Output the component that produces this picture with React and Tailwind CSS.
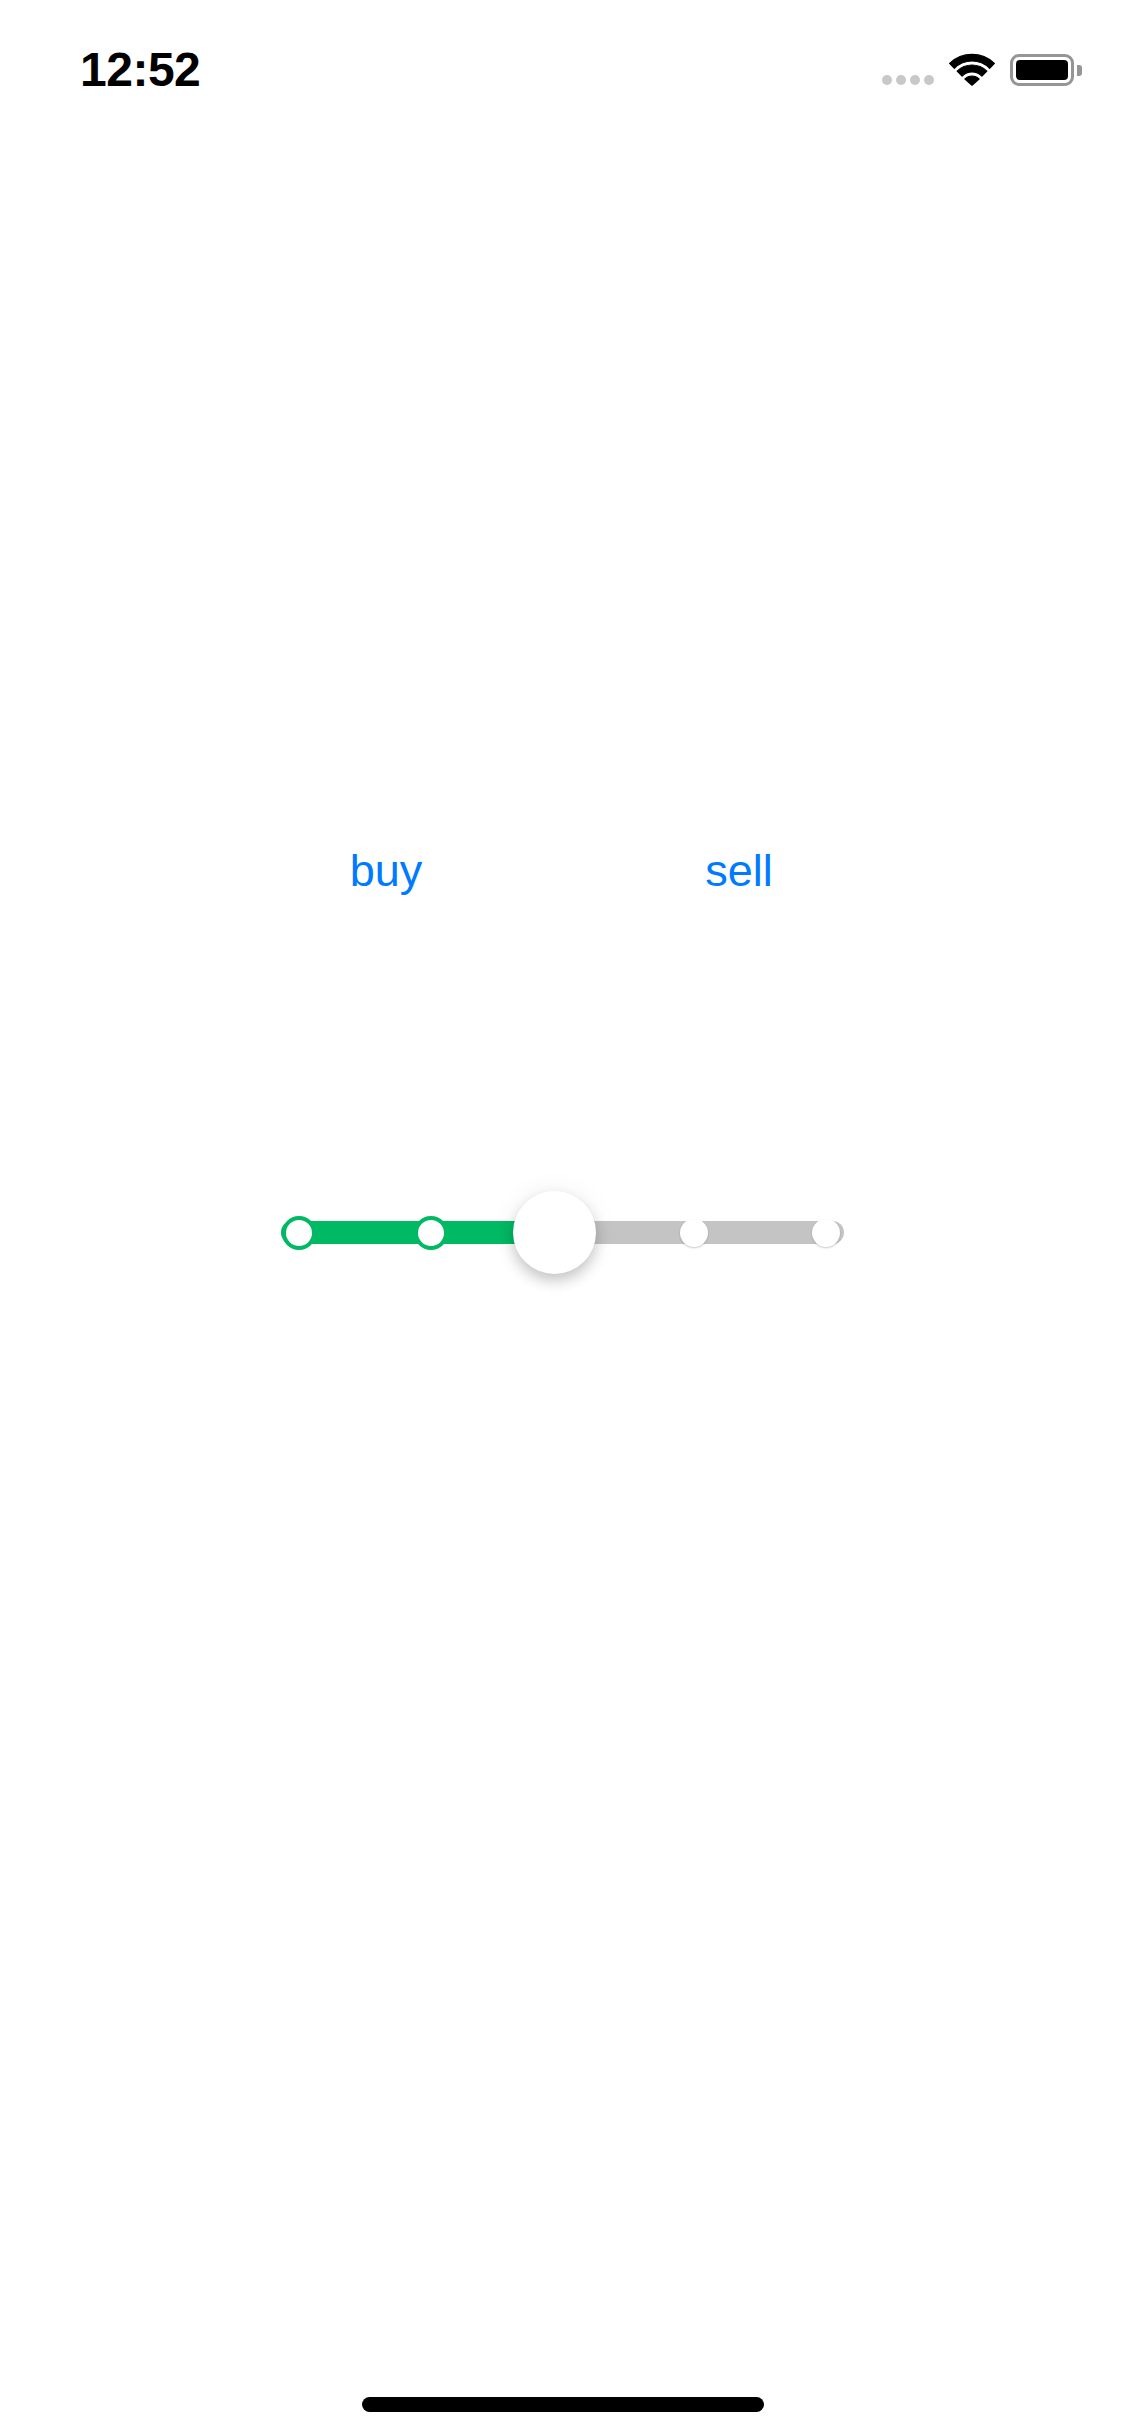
import React from 'react';

const font = { fontFamily: '"Liberation Sans", Arial, sans-serif' };

function Wifi() {
  return (
    <svg width="46" height="33" viewBox="0 0 46 33" className="block">
      <g fill="#000" stroke="#000" strokeWidth="1.2" strokeLinejoin="round">
        <path d="M0.6 10.4 A32.5 32.5 0 0 1 45.4 10.4 L40.68 15.32 A25 25 0 0 0 5.32 15.32 Z" />
        <path d="M8.15 18.15 A21 21 0 0 1 37.85 18.15 L32.9 23.1 A14 14 0 0 0 13.1 23.1 Z" />
        <path d="M23 32.2 L15.93 25.93 A10 10 0 0 1 30.07 25.93 Z" />
      </g>
    </svg>
  );
}

function Battery() {
  return (
    <div className="flex items-center">
      <div className="w-[64px] h-[32px] rounded-[9px] border-[3px] border-[#959595] p-[3px]">
        <div className="w-full h-full rounded-[4px] bg-black" />
      </div>
      <div className="w-[5px] h-[11px] ml-[3px] rounded-r-[3px] bg-[#959595]" />
    </div>
  );
}

function StatusBar() {
  return (
    <div className="h-[132px] flex justify-between items-start pl-[80px] pr-[43px] pt-[46px]">
      <span className="text-[48px] leading-none font-bold text-black tracking-[-0.5px]">12:52</span>
      <div className="flex items-end gap-[15px] pt-[7px]">
        <div className="flex gap-[4px] pb-[1px]">
          {[0, 1, 2, 3].map((i) => (
            <span key={i} className="w-[10px] h-[10px] rounded-full bg-[#c8c8c8]" />
          ))}
        </div>
        <Wifi />
        <Battery />
      </div>
    </div>
  );
}

const stops = [0, 0.25, 0.5, 0.75, 1];
const value = 0.4848; // thumb sits a little before the middle stop

function StepSlider() {
  return (
    <div className="relative w-[563px] h-[83px] mx-auto flex items-center">
      <div className="w-full h-[23px] rounded-full bg-[#c4c4c4] overflow-hidden">
        <div className="h-full bg-[#00ba63]" style={{ width: `${18 + value * 527}px` }} />
      </div>
      {stops.map((s, i) => {
        const left = 18 + s * 527;
        if (s === 0.5) return null;
        const active = s <= value;
        return active ? (
          <span
            key={i}
            className="absolute top-1/2 w-[34px] h-[34px] -ml-[17px] -mt-[17px] rounded-full bg-white border-4 border-[#00ba63]"
            style={{ left }}
          />
        ) : (
          <span
            key={i}
            className="absolute top-1/2 w-[28px] h-[28px] -ml-[14px] -mt-[14px] rounded-full bg-white shadow-[0_1px_2px_rgba(0,0,0,0.22)]"
            style={{ left }}
          />
        );
      })}
      <span
        className="absolute top-0 w-[83px] h-[83px] -ml-[41.5px] rounded-full bg-white shadow-[0_7px_14px_rgba(0,0,0,0.2),0_0_28px_rgba(0,0,0,0.06)]"
        style={{ left: 18 + value * 527 }}
      />
    </div>
  );
}

export default function App() {
  return (
    <div className="h-[2436px] w-[1125px] bg-white flex flex-col overflow-hidden" style={font}>
      <StatusBar />
      <div className="mt-[716px] flex justify-center gap-[153px]">
        <button className="w-[200px] text-center text-[45px] leading-none text-[#007aff]">buy</button>
        <button className="w-[200px] text-center text-[45px] leading-none text-[#007aff]">sell</button>
      </div>
      <div className="mt-[298px]">
        <StepSlider />
      </div>
      <div className="flex-1" />
      <div className="mx-auto mb-[24px] w-[402px] h-[15px] rounded-full bg-black" />
    </div>
  );
}
